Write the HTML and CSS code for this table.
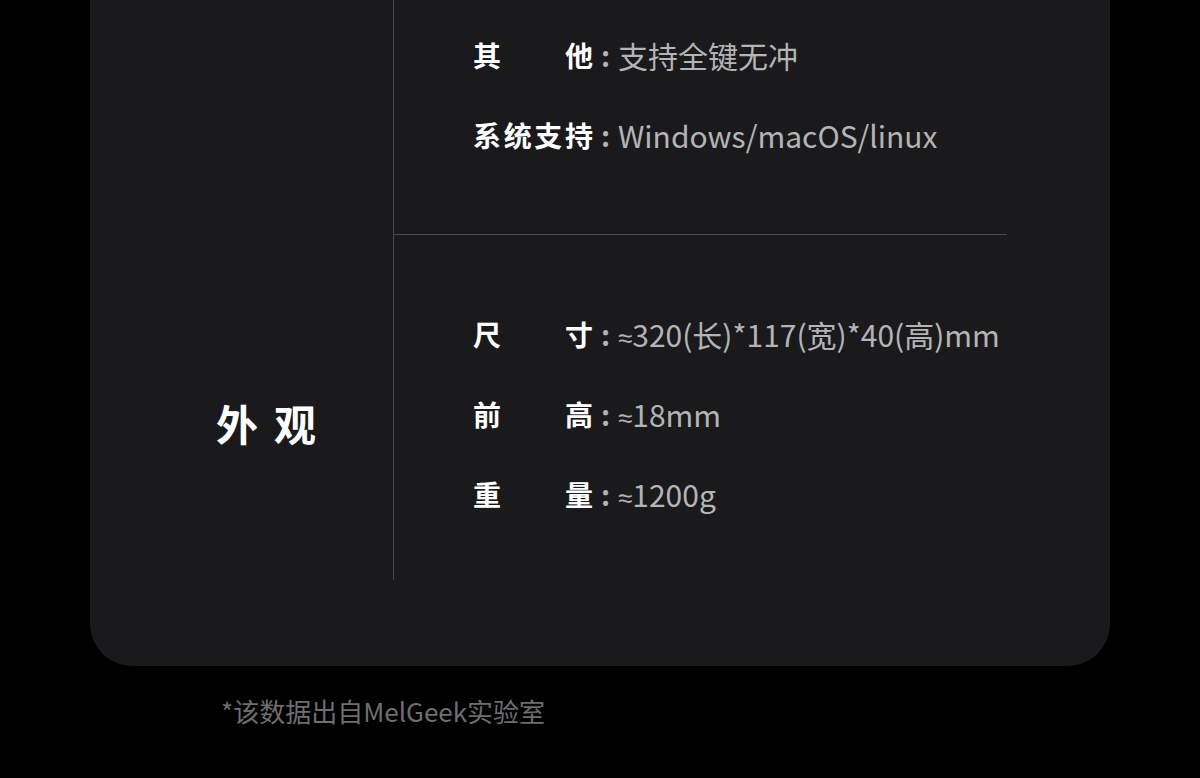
FILE: index.html
```html
<!DOCTYPE html>
<html lang="zh-CN">
<head>
    <meta charset="UTF-8">
    <meta name="viewport" content="width=device-width, initial-scale=1.0">
    <title>规格参数</title>
    <link rel="stylesheet" href="styles.css">
</head>
<body>
    <div class="spec-card">
        <!-- 上一组参数（接续） -->
        <div class="spec-group">
            <div class="group-title"></div>
            <div class="group-rows group-first">
                <div class="spec-row">
                    <span class="spec-label">其他</span>
                    <span class="spec-colon">:</span>
                    <span class="spec-value">支持全键无冲</span>
                </div>
                <div class="spec-row">
                    <span class="spec-label">系统支持</span>
                    <span class="spec-colon">:</span>
                    <span class="spec-value">Windows/macOS/linux</span>
                </div>
            </div>
        </div>

        <!-- 外观 -->
        <div class="spec-group">
            <div class="group-title">外观</div>
            <div class="group-rows group-last">
                <div class="spec-row">
                    <span class="spec-label">尺寸</span>
                    <span class="spec-colon">:</span>
                    <span class="spec-value"><span class="approx">≈</span>320(长)*117(宽)*40(高)mm</span>
                </div>
                <div class="spec-row">
                    <span class="spec-label">前高</span>
                    <span class="spec-colon">:</span>
                    <span class="spec-value"><span class="approx">≈</span>18mm</span>
                </div>
                <div class="spec-row">
                    <span class="spec-label">重量</span>
                    <span class="spec-colon">:</span>
                    <span class="spec-value"><span class="approx">≈</span>1200g</span>
                </div>
            </div>
        </div>
    </div>

    <p class="footnote">*该数据出自MelGeek实验室</p>
</body>
</html>
```

FILE: styles.css
```css
* {
    margin: 0;
    padding: 0;
    box-sizing: border-box;
}

body {
    font-family: "Noto Sans CJK SC", "Noto Sans", sans-serif;
    background-color: #000;
    color: #fff;
    height: 100vh;
    overflow: hidden;
}

.spec-card {
    margin: 0 90px;
    padding: 0 103px 86px 0;
    background-color: #1a1a1c;
    border-radius: 0 0 42px 42px;
}

.spec-group {
    display: grid;
    grid-template-columns: 303px 1fr;
}

.group-title {
    align-self: center;
    padding: 30px 0 0 126px;
    font-size: 42px;
    font-weight: bold;
    letter-spacing: 16px;
    line-height: 1;
}

.group-rows {
    border-left: 1px solid #464648;
    padding-left: 79px;
}

.group-first {
    padding-top: 15px;
    padding-bottom: 59px;
    border-bottom: 1px solid #4c4c4e;
}

.group-last {
    padding-top: 59px;
    padding-bottom: 46px;
}

.spec-row {
    display: flex;
    align-items: center;
    height: 80px;
}

.spec-label {
    width: 120px;
    font-size: 28px;
    font-weight: bold;
    text-align: justify;
    text-align-last: justify;
    color: #fff;
}

.spec-colon {
    width: 25px;
    text-align: center;
    font-size: 28px;
    font-weight: bold;
    color: #b4b4b4;
}

.spec-value {
    font-size: 30px;
    color: #b4b4b6;
}

.approx {
    font-family: "Noto Sans", sans-serif;
    font-size: 26px;
}

.footnote {
    margin-top: 28px;
    padding-left: 221px;
    font-size: 26px;
    line-height: 34px;
    color: #6e6e6e;
}
```
